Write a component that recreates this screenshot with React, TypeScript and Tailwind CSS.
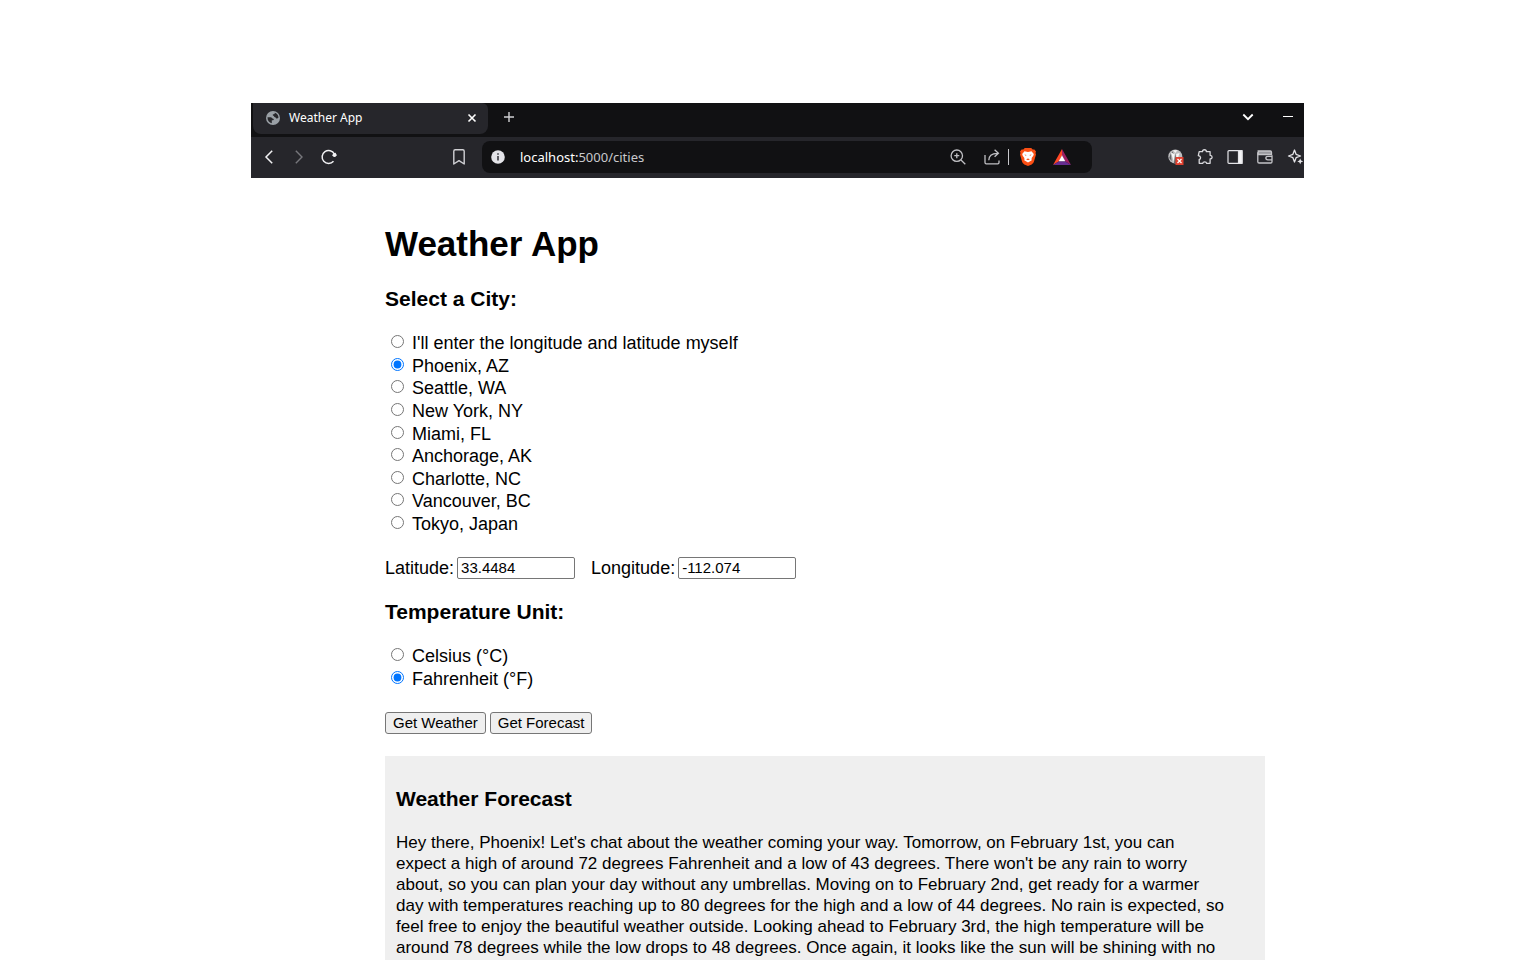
import { useState } from "react";

const cities = [
  { name: "I'll enter the longitude and latitude myself", lat: "", lon: "" },
  { name: "Phoenix, AZ", lat: "33.4484", lon: "-112.074" },
  { name: "Seattle, WA", lat: "47.6062", lon: "-122.3321" },
  { name: "New York, NY", lat: "40.7128", lon: "-74.006" },
  { name: "Miami, FL", lat: "25.7617", lon: "-80.1918" },
  { name: "Anchorage, AK", lat: "61.2181", lon: "-149.9003" },
  { name: "Charlotte, NC", lat: "35.2271", lon: "-80.8431" },
  { name: "Vancouver, BC", lat: "49.2827", lon: "-123.1207" },
  { name: "Tokyo, Japan", lat: "35.6762", lon: "139.6503" },
];

const units = ["Celsius (°C)", "Fahrenheit (°F)"];

function GlobeIcon() {
  return (
    <svg className="size-[14px] shrink-0" viewBox="0 0 14 14">
      <circle cx="7" cy="7" r="7" fill="#9aa0a6" />
      <path d="M1.500 6.200h3.200c1.200 0 1.400 1.600 2.600 1.600.8 0 .6 1.500-.3 1.500H5.800v2.900C3.200 11.700 1.300 9.400 1.500 6.200z" fill="#27272b" />
      <path d="M8.800 1.700c0 1.200-.5 1.600-1.500 1.600-.8 0-.8 1.200 0 1.400.9.200.7 1.500 1.700 1.500 1.100 0 .9 1.400 1.900 1.400.6 0 1-.5 1.500-.5C12.700 4.500 11.200 2.400 8.800 1.700z" fill="#27272b" />
    </svg>
  );
}

function TabStrip() {
  return (
    <div className="flex h-[34px] items-start bg-[#111113]">
      <div className="ml-[2px] flex h-[31px] w-[235px] items-center rounded-b-lg rounded-tr-md bg-[#26262b] pr-2.5 pb-px pl-[13px]">
        <GlobeIcon />
        <span className="ml-[9px] grow text-[12px] leading-4 text-white">Weather App</span>
        <button aria-label="Close tab" className="flex size-3 items-center justify-center">
          <svg className="size-[10px]" viewBox="0 0 10 10" stroke="#fff" strokeWidth="1.600">
            <path d="M1.500 1.500l7 7M8.500 1.500l-7 7" />
          </svg>
        </button>
      </div>
      <button aria-label="New tab" className="ml-4 flex h-7 w-[10px] items-center justify-center">
        <svg className="size-[10px] shrink-0" viewBox="0 0 10 10" stroke="#d0d0d3" strokeWidth="1.400">
          <path d="M5 0v10M0 5h10" />
        </svg>
      </button>
      <div className="grow" />
      <button aria-label="Search tabs" className="flex h-7 w-3 items-center justify-center">
        <svg className="h-[8px] w-[12px] shrink-0" viewBox="0 0 12 8" fill="none" stroke="#fff" strokeWidth="1.800">
          <path d="M1.300 1.500L6 6.200l4.700-4.700" />
        </svg>
      </button>
      <button aria-label="Minimize" className="mr-[11px] ml-[29px] flex h-[27px] w-[10px] items-center">
        <span className="h-px w-full bg-white" />
      </button>
    </div>
  );
}

function AddressBar() {
  return (
    <div className="flex h-8 w-[610px] items-center rounded-lg bg-[#111113] pl-[9px]">
      <svg className="size-[14px] shrink-0" viewBox="0 0 14 14">
        <circle cx="7" cy="7" r="6.800" fill="#e4e4e8" />
        <path d="M7 3.200v1.600M7 6v4.600" stroke="#3a3a40" strokeWidth="1.600" />
      </svg>
      <span className="ml-[15px] grow text-[13px] leading-5 text-[#c8c8cc]">
        <span className="text-white">localhost:</span>5000/cities
      </span>
      <button aria-label="Zoom" className="flex size-4">
        <svg className="size-4" viewBox="0 0 16 16" fill="none" stroke="#c0c0c4" strokeWidth="1.300">
          <circle cx="6.800" cy="6.700" r="5.700" />
          <path d="M11 11l4.300 4.300M6.800 4.200v5M4.300 6.700h5" />
        </svg>
      </button>
      <button aria-label="Share" className="ml-[18px] flex size-4">
        <svg className="size-4" viewBox="0 0 16 16" fill="none" stroke="#c0c0c4" strokeWidth="1.300">
          <path d="M1 6v7.500c0 .9.500 1.300 1.300 1.300h11.400c.8 0 1.300-.5 1.300-1.300V11.500" />
          <path d="M4.800 11.300c0-4.400 2.500-7 8.800-7M10.600.800l3.800 3.500-3.800 3.500" />
        </svg>
      </button>
      <span className="ml-2 h-4 w-px bg-[#c8c8cc]" />
      <button aria-label="Brave Shields" className="ml-[11px] flex h-[18px] w-4">
        <svg className="h-[18px] w-4" viewBox="0 0 16 18">
          <path d="M4.800 0h6.400l1.500 1.600 1.700-.2L16 3.600l-.5 1.500.500 1.500-2.100 7.200c-.4 1.300-1.200 1.900-2.200 2.600L8 18l-3.700-1.600c-1-.7-1.800-1.300-2.200-2.600L0 6.600l.5-1.500L0 3.600l1.600-2.200 1.700.2z" fill="#fb4f14" />
          <path d="M4.500 3.200L8 3.900l3.500-.7 2.300 2.900-.5 1.600-1.500 2-.3 1.600.3 1L8 14.500 4.200 12.300l.3-1-.3-1.600-1.500-2-.5-1.600z" fill="#fff" />
          <path d="M4.300 6.500l2.300.4-.8.900zM11.700 6.500l-2.300.4.8.9zM6.100 11.200l1.900-.8 1.900.8L8 12.300z" fill="#fb4f14" />
        </svg>
      </button>
      <button aria-label="Brave Rewards" className="mr-[21px] ml-[17px] flex h-4 w-[18px]">
        <svg className="h-4 w-[18px]" viewBox="0 0 18 16">
          <path d="M9 0L0 16l6-3.800 3-5.700z" fill="#ff4724" />
          <path d="M9 0l9 16-6-3.800-3-5.700z" fill="#9e1f63" />
          <path d="M0 16h18l-6-3.800H6z" fill="#662d91" />
          <path d="M9 6.300l3.300 6H5.700z" fill="#fff" />
        </svg>
      </button>
    </div>
  );
}

function Toolbar() {
  return (
    <div className="flex h-[41px] items-center overflow-hidden bg-[#26262b] pb-[2px]">
      <button aria-label="Back" className="ml-[13px] flex h-[14px] w-[10px] shrink-0">
        <svg className="h-[14px] w-[10px]" viewBox="0 0 10 14" fill="none" stroke="#f2f2f4" strokeWidth="1.500">
          <path d="M8.200.700L2 7l6.200 6.300" />
        </svg>
      </button>
      <button aria-label="Forward" className="ml-5 flex h-[14px] w-[10px] shrink-0">
        <svg className="h-[14px] w-[10px]" viewBox="0 0 10 14" fill="none" stroke="#77777c" strokeWidth="1.400">
          <path d="M1.800.700L8 7l-6.200 6.300" />
        </svg>
      </button>
      <button aria-label="Reload" className="ml-[17px] flex size-4 shrink-0">
        <svg className="size-4" viewBox="0 0 16 16" fill="none" stroke="#f2f2f4" strokeWidth="1.500">
          <path d="M12.500 12.300A6.500 6.500 0 1 1 13.400 5" />
          <path d="M14.200 3.400l1.600 3.200-2.200 1.500-2.500-1.300z" fill="#f2f2f4" stroke="none" />
          <circle cx="13.500" cy="5.800" r="1.900" fill="#f2f2f4" stroke="none" />
        </svg>
      </button>
      <button aria-label="Bookmark" className="ml-[116px] flex h-4 w-3 shrink-0">
        <svg className="h-4 w-3" viewBox="0 0 12 16" fill="none" stroke="#d0d0d4" strokeWidth="1.400" strokeLinejoin="round">
          <path d="M.800 15V2.200C.800 1.400 1.300.800 2.200.800h7.600c.9 0 1.400.6 1.400 1.400V15L6 11.600z" />
        </svg>
      </button>
      <div className="ml-[17px] shrink-0">
        <AddressBar />
      </div>
      <div className="grow" />
      <button aria-label="Extension" className="flex size-4 shrink-0">
        <svg className="size-4" viewBox="0 0 16 16">
          <circle cx="7.300" cy="7.500" r="7" fill="#bdbdbf" />
          <path d="M5.200 1.200L7.300 4l2.100-2.800zM3 4l3 9 .7-8.500zM11.600 4L8.200 5l.3 8z" fill="#f6f6f6" />
          <path d="M7.300 4.500L6 14h2.600zM3 4l.6 8L1.200 9zM4 2.200L6 5l-2-1.200z" fill="#606064" />
          <rect x="7.500" y="8" width="8" height="8" fill="#e0402f" />
          <path d="M9.500 10l4 4M13.500 10l-4 4" stroke="#fff" strokeWidth="1.200" />
        </svg>
      </button>
      <button aria-label="Extensions" className="ml-[13px] flex size-4 shrink-0">
        <svg className="size-4" viewBox="0 0 16 16" fill="none" stroke="#d8d8dc" strokeWidth="1.300" strokeLinejoin="round">
          <path d="M2.200 2.700h3.300c0-2.600 3.900-2.600 3.900 0h3.700v3.600c2.700.2 2.700 3.500 0 3.700v4.300H9.700c-.3-2-3.700-2-4 0H2.200v-3.800c2-.4 2-3.500-.9-3.900z" />
        </svg>
      </button>
      <button aria-label="Sidebar" className="ml-[14px] flex size-4 shrink-0">
        <svg className="size-4" viewBox="0 0 16 16" fill="none" stroke="#e4e4e8" strokeWidth="1.200">
          <rect x="1" y="1.600" width="14" height="12.800" rx="1" />
          <path d="M11.500 1.600H15v12.800h-3.500z" fill="#f4f4f6" />
        </svg>
      </button>
      <button aria-label="Wallet" className="ml-[14px] flex size-4 shrink-0">
        <svg className="size-4" viewBox="0 0 16 16" fill="none" stroke="#c4c4c8" strokeWidth="1.300">
          <path d="M1.200 2h12c.8 0 1.300.5 1.300 1.300V5.500H1.200z" fill="#98989d" />
          <path d="M.800 3.300v9.400c0 .8.500 1.300 1.300 1.300h11.600c.8 0 1.300-.5 1.300-1.300V6.300M15 7.300h-4.200c-2.600 0-2.600 3.600 0 3.600H15" />
        </svg>
      </button>
      <button aria-label="Leo AI" className="mr-px ml-[14px] flex size-4 shrink-0">
        <svg className="size-4" viewBox="0 0 16 16" fill="none" stroke="#e4e4e8" strokeWidth="1.300" strokeLinejoin="round">
          <path d="M7.500 1l1.600 4.300L13.500 7 9.100 8.700 7.500 13 5.900 8.700 1.500 7l4.400-1.700z" />
          <path d="M13.200 9.500l.9 2 2 .9-2 .9-.9 2-.9-2-2-.9 2-.9z" fill="#e4e4e8" stroke="none" />
        </svg>
      </button>
    </div>
  );
}

type RadioProps = { group: string; label: string; checked: boolean; onSelect: () => void };

function RadioRow({ group, label, checked, onSelect }: RadioProps) {
  return (
    <label className="flex items-start gap-2 pl-1.5 text-[18px] leading-[22px]">
      <input type="radio" name={group} checked={checked} onChange={onSelect} className="mt-[3px] size-[13px]" />
      {label}
    </label>
  );
}

const headingStyle = "text-[21px] leading-6 font-bold";
const fieldStyle = "w-[118px] rounded-[2px] border border-[#767676] bg-white px-[3px] text-[15px] leading-5";
const buttonStyle = "rounded-[3px] border border-[#767676] bg-[#efefef] px-[7px] text-[15px] leading-5";

export default function App() {
  const [city, setCity] = useState(1);
  const [unit, setUnit] = useState(1);
  const [lat, setLat] = useState("33.4484");
  const [lon, setLon] = useState("-112.074");

  const pickCity = (index: number) => {
    setCity(index);
    setLat(cities[index].lat);
    setLon(cities[index].lon);
  };

  return (
    <div className="flex min-h-screen flex-col bg-white pt-[103px] pr-[232px] pl-[251px] font-['Liberation_Sans',Arial,sans-serif] text-black">
      <header className="font-['Noto_Sans',sans-serif]">
        <TabStrip />
        <Toolbar />
      </header>

      <main className="flex grow flex-col pt-[46px] pr-[39px] pl-[134px]">
        <h1 className="text-[35px] leading-10 font-bold">Weather App</h1>

        <h3 className={`mt-[23px] ${headingStyle}`}>Select a City:</h3>
        <div className="mt-[21px] grid min-h-[203px] content-between">
          {cities.map((c, i) => (
            <RadioRow key={c.name} group="city" label={c.name} checked={city === i} onSelect={() => pickCity(i)} />
          ))}
        </div>

        <div className="mt-[22px] flex items-center text-[18px] leading-5">
          <label htmlFor="lat">Latitude:</label>
          <input id="lat" className={`ml-[3px] ${fieldStyle}`} value={lat} onChange={(e) => setLat(e.target.value)} />
          <label htmlFor="lon" className="ml-4">Longitude:</label>
          <input id="lon" className={`ml-[3px] ${fieldStyle}`} value={lon} onChange={(e) => setLon(e.target.value)} />
        </div>

        <h3 className={`mt-[21px] ${headingStyle}`}>Temperature Unit:</h3>
        <div className="mt-[21px] grid min-h-[45px] content-between">
          {units.map((u, i) => (
            <RadioRow key={u} group="unit" label={u} checked={unit === i} onSelect={() => setUnit(i)} />
          ))}
        </div>

        <div className="mt-[22px] flex gap-1">
          <button className={buttonStyle}>Get Weather</button>
          <button className={buttonStyle}>Get Forecast</button>
        </div>

        <section className="mt-[22px] grow bg-[#efefef] px-[11px] pt-[31px]">
          <h3 className={headingStyle}>Weather Forecast</h3>
          <p className="mt-[21px] text-[17px] leading-[21px]">
            Hey there, Phoenix! Let's chat about the weather coming your way. Tomorrow, on February 1st, you can
            <br />
            expect a high of around 72 degrees Fahrenheit and a low of 43 degrees. There won't be any rain to worry
            <br />
            about, so you can plan your day without any umbrellas. Moving on to February 2nd, get ready for a warmer
            <br />
            day with temperatures reaching up to 80 degrees for the high and a low of 44 degrees. No rain is expected, so
            <br />
            feel free to enjoy the beautiful weather outside. Looking ahead to February 3rd, the high temperature will be
            <br />
            around 78 degrees while the low drops to 48 degrees. Once again, it looks like the sun will be shining with no
          </p>
        </section>
      </main>
    </div>
  );
}
